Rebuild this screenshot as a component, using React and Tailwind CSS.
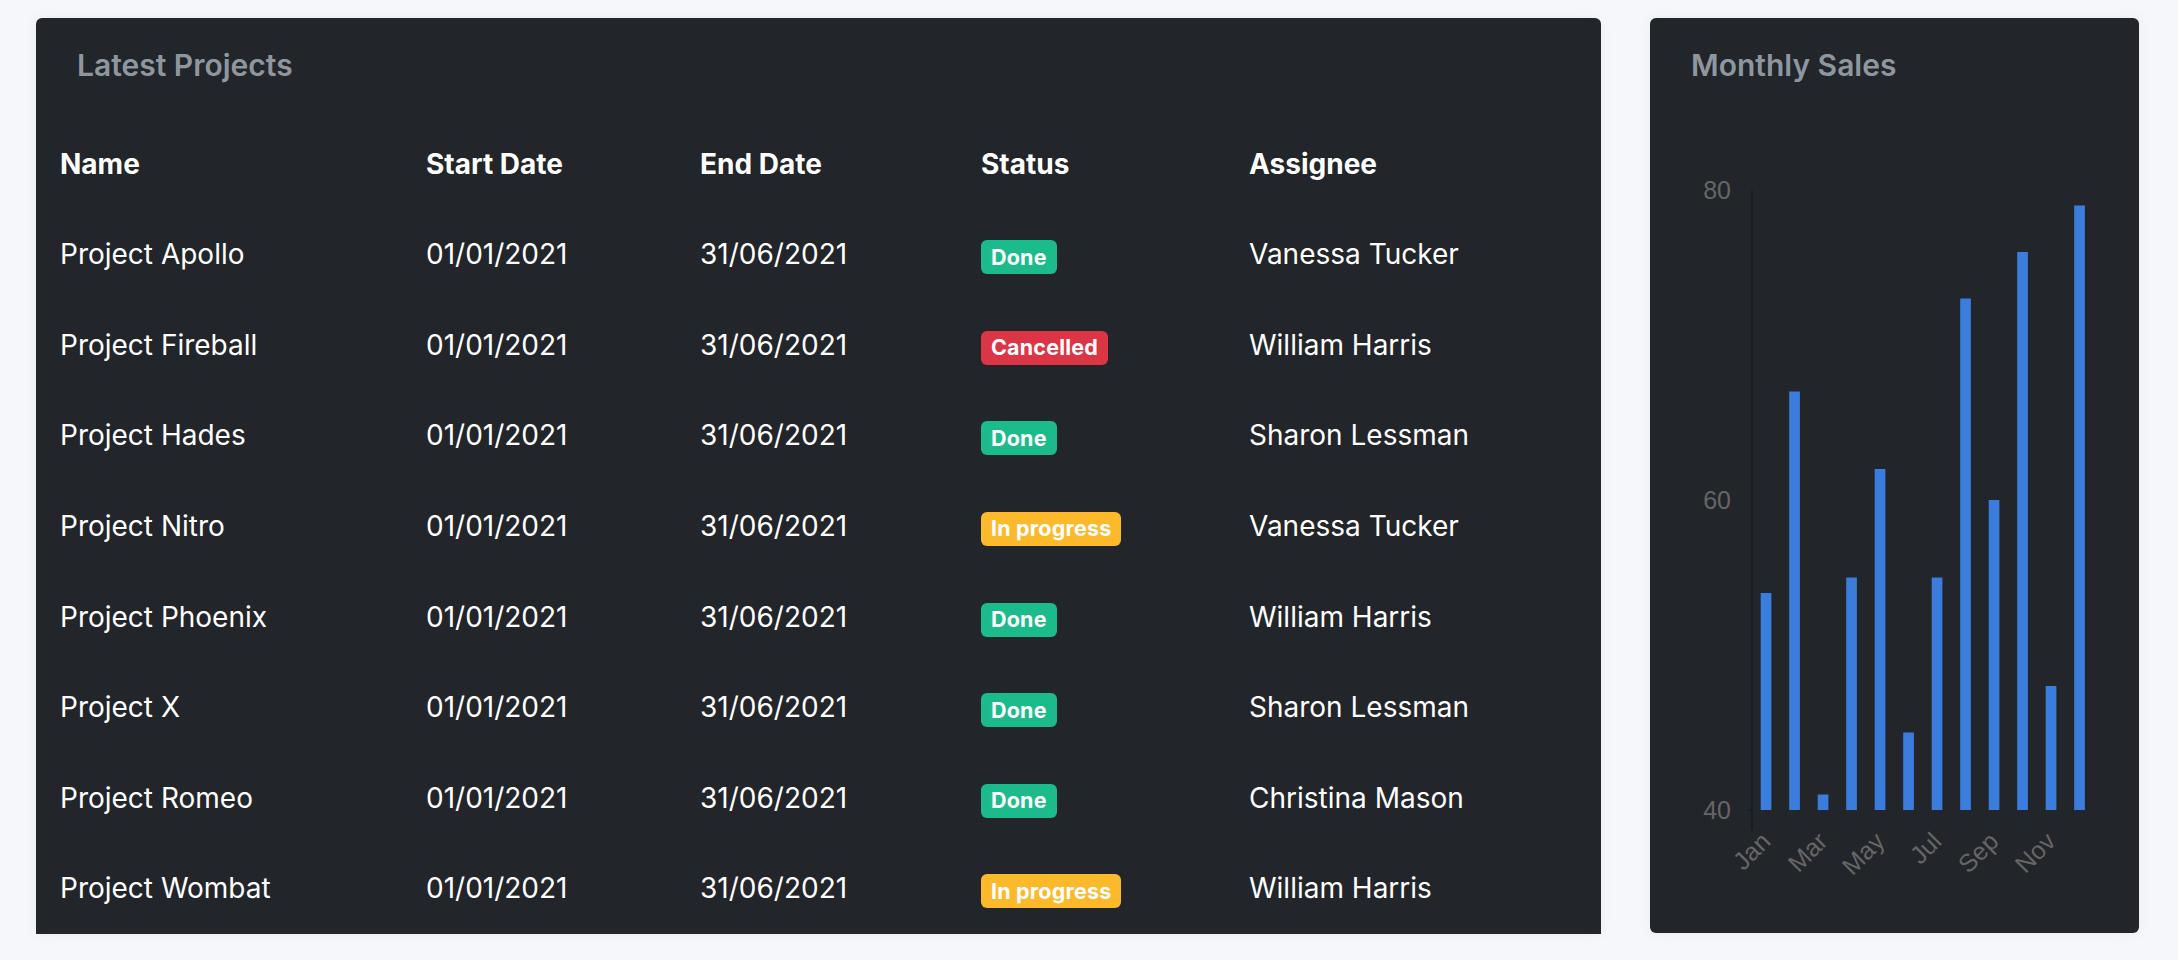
const projects = [
  { name: 'Project Apollo', status: 'Done', assignee: 'Vanessa Tucker' },
  { name: 'Project Fireball', status: 'Cancelled', assignee: 'William Harris' },
  { name: 'Project Hades', status: 'Done', assignee: 'Sharon Lessman' },
  { name: 'Project Nitro', status: 'In progress', assignee: 'Vanessa Tucker' },
  { name: 'Project Phoenix', status: 'Done', assignee: 'William Harris' },
  { name: 'Project X', status: 'Done', assignee: 'Sharon Lessman' },
  { name: 'Project Romeo', status: 'Done', assignee: 'Christina Mason' },
  { name: 'Project Wombat', status: 'In progress', assignee: 'William Harris' },
];

const sales = [54, 67, 41, 55, 62, 45, 55, 73, 60, 76, 48, 79];
const months = ['Jan', 'Feb', 'Mar', 'Apr', 'May', 'Jun', 'Jul', 'Aug', 'Sep', 'Oct', 'Nov', 'Dec'];

const badgeColors = {
  Done: 'bg-[#1cbb8c]',
  Cancelled: 'bg-[#dc3545]',
  'In progress': 'bg-[#fcb92c]',
};

function StatusBadge({ status }) {
  return (
    <span
      className={`${badgeColors[status]} mt-[6px] inline-flex h-[34px] items-center rounded-[6px] px-[10px] text-[21.5px] font-bold leading-none tracking-[0.2px] text-white`}
    >
      {status}
    </span>
  );
}

function CardTitle({ children }) {
  return (
    <h5 className="px-[41px] pt-[29px] pb-[36px] text-[30px] font-semibold leading-[36px] text-[#8e979f]">
      {children}
    </h5>
  );
}

const cols = 'grid grid-cols-[366px_274px_281px_268px_1fr]';

function ProjectsTable() {
  return (
    <div className="flex-1 self-start rounded-t-[6px] bg-[#222529] shadow-[0_0_14px_rgba(33,37,41,0.05)]">
      <CardTitle>Latest Projects</CardTitle>
      <div className={`${cols} h-[90px] items-center text-[28px] font-bold text-white`}>
        <div className="px-[24px]">Name</div>
        <div className="px-[24px]">Start Date</div>
        <div className="px-[24px]">End Date</div>
        <div className="px-[24px]">Status</div>
        <div className="px-[24px]">Assignee</div>
      </div>
      {projects.map((p) => (
        <div key={p.name} className={`${cols} h-[90.6px] items-center text-[28px] text-white`}>
          <div className="px-[24px]">{p.name}</div>
          <div className="px-[24px]">01/01/2021</div>
          <div className="px-[24px]">31/06/2021</div>
          <div className="flex items-center px-[24px]">
            <StatusBadge status={p.status} />
          </div>
          <div className="px-[24px]">{p.assignee}</div>
        </div>
      ))}
    </div>
  );
}

function SalesChart() {
  const bottom = 691;
  const unit = 15.5;
  return (
    <svg width="489" height="760" className="block" style={{ fontFamily: '"Liberation Sans", Arial, sans-serif' }}>
      <line x1="102" y1="71" x2="102" y2="711" stroke="#1a1c1f" strokeWidth="1.5" />
      <line x1="98" y1={bottom} x2="102" y2={bottom} stroke="#1a1c1f" strokeWidth="1.5" />
      {[80, 60, 40].map((v) => (
        <text key={v} x="81" y={bottom - (v - 40) * unit + 9} textAnchor="end" fontSize="25" fill="#666">
          {v}
        </text>
      ))}
      {sales.map((v, i) => {
        const x = 110.7 + i * 28.5;
        const h = (v - 40) * unit;
        return <rect key={months[i]} x={x} y={bottom - h} width="10.7" height={h} fill="#3b7ddd" />;
      })}
      {months.map((m, i) =>
        i % 2 === 0 ? (
          <text
            key={m}
            x={116 + i * 28.5 + 6}
            y="724"
            textAnchor="end"
            fontSize="25"
            fill="#666"
            transform={`rotate(-45 ${116 + i * 28.5 + 6} 724)`}
          >
            {m}
          </text>
        ) : null
      )}
    </svg>
  );
}

export default function App() {
  return (
    <div
      className="flex min-h-screen items-stretch gap-[49px] bg-[#f5f7fb] pt-[18px] pr-[39px] pl-[36px] pb-[27px]"
      style={{ fontFamily: 'Inter, "Noto Sans", sans-serif' }}
    >
      <ProjectsTable />
      <div className="h-[915px] w-[489px] shrink-0 overflow-hidden rounded-[6px] bg-[#222529] shadow-[0_0_14px_rgba(33,37,41,0.05)]">
        <CardTitle>Monthly Sales</CardTitle>
        <SalesChart />
      </div>
    </div>
  );
}
